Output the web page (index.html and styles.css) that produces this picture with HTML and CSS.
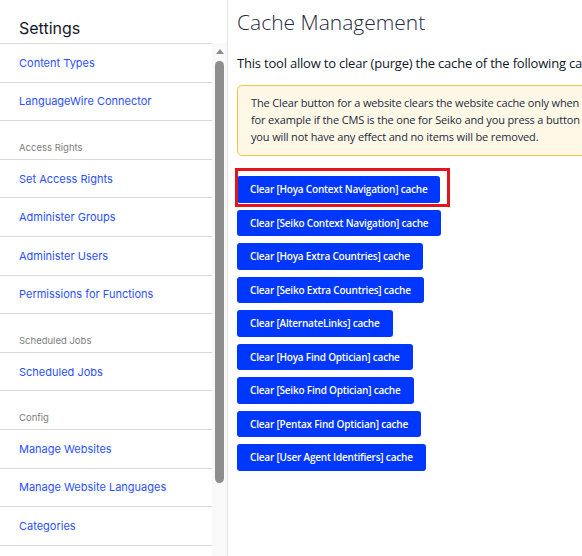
FILE: index.html
```html
<!DOCTYPE html>
<html>
<head>
<meta charset="utf-8">
<link rel="stylesheet" href="styles.css">
</head>
<body>
<div class="app">
  <aside class="sidebar">
    <div class="side-title">Settings</div>
    <div class="side-body">
      <ul class="nav">
        <li class="nav-item"><a>Content Types</a></li>
        <li class="nav-item"><a>LanguageWire Connector</a></li>
        <li class="nav-head">Access Rights</li>
        <li class="nav-item"><a>Set Access Rights</a></li>
        <li class="nav-item"><a>Administer Groups</a></li>
        <li class="nav-item"><a>Administer Users</a></li>
        <li class="nav-item"><a>Permissions for Functions</a></li>
        <li class="nav-head">Scheduled Jobs</li>
        <li class="nav-item"><a>Scheduled Jobs</a></li>
        <li class="nav-head">Config</li>
        <li class="nav-item"><a>Manage Websites</a></li>
        <li class="nav-item"><a>Manage Website Languages</a></li>
        <li class="nav-item"><a>Categories</a></li>
      </ul>
      <div class="scrollbar">
        <div class="sb-arrow"></div>
        <div class="sb-thumb"></div>
      </div>
    </div>
  </aside>
  <main class="main">
    <h1 class="title">Cache Management</h1>
    <p class="intro">This tool allow to clear (purge) the cache of the following caches:</p>
    <div class="alert">
      <span class="line">The Clear button for a website clears the website cache only when the CMS is the one for that website,</span>
      <span class="line">for example if the CMS is the one for Seiko and you press a button to clear the Hoya cache,</span>
      <span class="line">you will not have any effect and no items will be removed.</span>
    </div>
    <div class="buttons">
      <div class="btn-wrap">
        <button class="btn">Clear [Hoya Context Navigation] cache</button>
        <span class="highlight"></span>
      </div>
      <div class="btn-wrap"><button class="btn">Clear [Seiko Context Navigation] cache</button></div>
      <div class="btn-wrap"><button class="btn">Clear [Hoya Extra Countries] cache</button></div>
      <div class="btn-wrap"><button class="btn">Clear [Seiko Extra Countries] cache</button></div>
      <div class="btn-wrap"><button class="btn">Clear [AlternateLinks] cache</button></div>
      <div class="btn-wrap"><button class="btn">Clear [Hoya Find Optician] cache</button></div>
      <div class="btn-wrap"><button class="btn">Clear [Seiko Find Optician] cache</button></div>
      <div class="btn-wrap"><button class="btn">Clear [Pentax Find Optician] cache</button></div>
      <div class="btn-wrap"><button class="btn">Clear [User Agent Identifiers] cache</button></div>
    </div>
  </main>
</div>
</body>
</html>
```
FILE: styles.css
```css
html, body {
  margin: 0;
  padding: 0;
  background: #ffffff;
  overflow: hidden;
  height: 556px;
}
.app {
  display: flex;
  height: 556px;
  width: 582px;
  overflow: hidden;
}
.sidebar {
  width: 227px;
  flex: none;
  border-right: 1px solid #e3e3e3;
  display: flex;
  flex-direction: column;
  font-family: Inter, "Liberation Sans", sans-serif;
}
.side-title {
  height: 43px;
  box-sizing: border-box;
  padding: 17px 0 0 19px;
  font-size: 16px;
  color: #16162a;
  line-height: 22px;
}
.side-body {
  flex: 1;
  display: flex;
  overflow: hidden;
}
.nav {
  list-style: none;
  margin: 0;
  padding: 0;
  width: 212px;
  flex: none;
  border-top: 1px solid #d9d9d9;
}
.nav-item, .nav-head {
  border-bottom: 1px solid #d9d9d9;
  box-sizing: content-box;
  display: flex;
  padding-left: 19px;
}
.nav-item {
  height: 37.6px;
  align-items: center;
}
.nav-item a {
  font-size: 11px;
  color: #2b50ff;
  text-decoration: none;
}
.nav-head {
  align-items: flex-end;
  height: 31.6px;
  padding-bottom: 6px;
  font-size: 9.5px;
  color: #7d7d7d;
}
.scrollbar {
  flex: 1;
  background: #f9f9f9;
  display: flex;
  flex-direction: column;
  align-items: center;
  padding-top: 6px;
}
.sb-arrow {
  width: 0;
  height: 0;
  border-left: 4px solid transparent;
  border-right: 4px solid transparent;
  border-bottom: 5px solid #8d8d8d;
}
.sb-thumb {
  margin-top: 7px;
  width: 9px;
  height: 422px;
  background: #8e8e8e;
  border-radius: 5px;
}
.main {
  flex: none;
  width: 700px;
  padding-left: 9px;
  font-family: "Open Sans", "Liberation Sans", sans-serif;
  color: #212529;
}
.title {
  margin: 8px 0 0 0;
  font-size: 21px;
  font-weight: 300;
  line-height: 28px;
  color: #1f2a44;
}
.intro {
  margin: 17px 0 0 0;
  font-size: 13px;
  letter-spacing: -0.2px;
  line-height: 20px;
  white-space: nowrap;
  color: #101828;
}
.alert {
  margin-top: 12px;
  border: 1px solid #f4c33f;
  background: #fff8e6;
  border-radius: 5px;
  padding: 8px 13px 10px 13px;
  font-size: 11px;
  letter-spacing: -0.15px;
  line-height: 17px;
  color: #1b2a3d;
}
.line {
  display: block;
  white-space: nowrap;
}
.buttons {
  margin-top: 20px;
  display: flex;
  flex-direction: column;
  align-items: flex-start;
  gap: 7px;
}
.btn-wrap {
  position: relative;
}
.btn {
  display: block;
  height: 26.5px;
  padding: 0 13px;
  border: none;
  border-radius: 3px;
  background: #0037ff;
  color: #ffffff;
  font-family: "Open Sans", "Liberation Sans", sans-serif;
  font-size: 10px;
  letter-spacing: -0.2px;
  font-weight: 600;
}
.highlight {
  position: absolute;
  left: -2px;
  top: -8px;
  right: -10px;
  bottom: -4px;
  border: 3px solid #e2141c;
  pointer-events: none;
}
```
